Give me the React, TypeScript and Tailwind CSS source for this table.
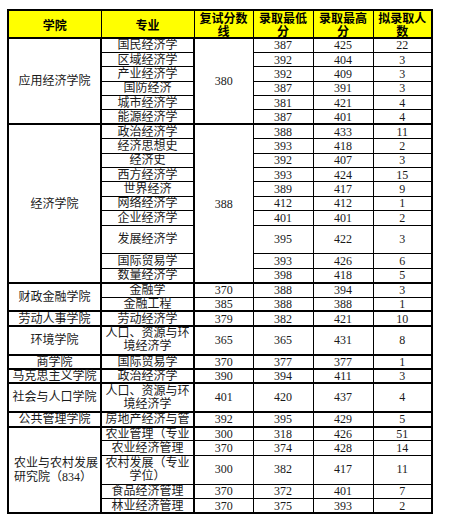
type Row = {
  major: string;
  retest?: string;
  min: string;
  max: string;
  count: string;
  tall?: boolean;
};

type Group = {
  college: string;
  retest?: string;
  alignLeft?: boolean;
  rows: Row[];
};

const groups: Group[] = [
  {
    college: '应用经济学院',
    retest: '380',
    rows: [
      { major: '国民经济学', min: '387', max: '425', count: '22' },
      { major: '区域经济学', min: '392', max: '404', count: '3' },
      { major: '产业经济学', min: '392', max: '409', count: '3' },
      { major: '国防经济', min: '387', max: '391', count: '3' },
      { major: '城市经济学', min: '381', max: '421', count: '4' },
      { major: '能源经济学', min: '387', max: '401', count: '4' },
    ],
  },
  {
    college: '经济学院',
    retest: '388',
    rows: [
      { major: '政治经济学', min: '388', max: '433', count: '11' },
      { major: '经济思想史', min: '393', max: '418', count: '2' },
      { major: '经济史', min: '392', max: '407', count: '3' },
      { major: '西方经济学', min: '393', max: '424', count: '15' },
      { major: '世界经济', min: '389', max: '417', count: '9' },
      { major: '网络经济学', min: '412', max: '412', count: '1' },
      { major: '企业经济学', min: '401', max: '401', count: '2' },
      { major: '发展经济学', min: '395', max: '422', count: '3', tall: true },
      { major: '国际贸易学', min: '393', max: '426', count: '6' },
      { major: '数量经济学', min: '398', max: '418', count: '5' },
    ],
  },
  {
    college: '财政金融学院',
    rows: [
      { major: '金融学', retest: '370', min: '388', max: '394', count: '3' },
      { major: '金融工程', retest: '385', min: '388', max: '388', count: '1' },
    ],
  },
  {
    college: '劳动人事学院',
    rows: [{ major: '劳动经济学', retest: '379', min: '382', max: '421', count: '10' }],
  },
  {
    college: '环境学院',
    rows: [
      { major: '人口、资源与环境经济学', retest: '365', min: '365', max: '431', count: '8', tall: true },
    ],
  },
  {
    college: '商学院',
    rows: [{ major: '国际贸易学', retest: '370', min: '377', max: '377', count: '1' }],
  },
  {
    college: '马克思主义学院',
    rows: [{ major: '政治经济学', retest: '390', min: '394', max: '411', count: '3' }],
  },
  {
    college: '社会与人口学院',
    rows: [
      { major: '人口、资源与环境经济学', retest: '401', min: '420', max: '437', count: '4', tall: true },
    ],
  },
  {
    college: '公共管理学院',
    rows: [{ major: '房地产经济与管', retest: '392', min: '395', max: '429', count: '5' }],
  },
  {
    college: '农业与农村发展研究院（834）',
    alignLeft: true,
    rows: [
      { major: '农业管理（专业', retest: '300', min: '318', max: '426', count: '51' },
      { major: '农业经济管理', retest: '370', min: '374', max: '428', count: '14' },
      { major: '农村发展（专业学位）', retest: '300', min: '382', max: '417', count: '11', tall: true },
      { major: '食品经济管理', retest: '370', min: '372', max: '401', count: '7' },
      { major: '林业经济管理', retest: '370', min: '375', max: '393', count: '2' },
    ],
  },
];

const headers = ['学院', '专业', '复试分数线', '录取最低分', '录取最高分', '拟录取人数'];

export default function App() {
  return (
    <div className="min-h-[521px] w-[452px] bg-white pl-[7px] pt-[9px]">
      <table
        className="table-fixed border-collapse border-2 border-black text-[12px] leading-[12px] text-[#1a1a1a]"
        style={{ width: 424 }}
      >
        <colgroup>
          <col className="w-[93px]" />
          <col className="w-[93px]" />
          <col className="w-[59px]" />
          <col className="w-[60px]" />
          <col className="w-[60px]" />
          <col className="w-[59px]" />
        </colgroup>
        <thead>
          <tr className="h-[27px] bg-[#ffff00]">
            {headers.map((h) => (
              <th
                key={h}
                className="border border-b-2 border-black p-0 px-[3px] text-center align-middle font-['Noto_Sans_CJK_SC',sans-serif] text-[12px] font-bold leading-[13px] text-black"
              >
                {h}
              </th>
            ))}
          </tr>
        </thead>
        <tbody className="font-['Liberation_Serif','Noto_Sans_CJK_SC',serif]">
          {groups.map((group) =>
            group.rows.map((row, i) => (
              <tr
                key={group.college + row.major + i}
                className={row.tall ? 'h-[28.8px] leading-[13px]' : 'h-[14.4px]'}
              >
                {i === 0 && (
                  <td
                    rowSpan={group.rows.length}
                    className={
                      group.alignLeft
                        ? 'border border-t-2 border-r-2 border-black p-0 pl-[5px] text-left align-middle leading-[14px]'
                        : 'border border-t-2 border-r-2 border-black p-0 text-center align-middle whitespace-nowrap'
                    }
                  >
                    {group.college}
                  </td>
                )}
                <td
                  className={
                    i === 0
                      ? 'border border-t-2 border-r-2 border-black p-0 text-center align-middle'
                      : 'border border-r-2 border-black p-0 text-center align-middle'
                  }
                >
                  {row.major}
                </td>
                {group.retest ? (
                  i === 0 && (
                    <td
                      rowSpan={group.rows.length}
                      className="border border-t-2 border-black p-0 text-center align-middle"
                    >
                      {group.retest}
                    </td>
                  )
                ) : (
                  <td
                    className={
                      i === 0
                        ? 'border border-t-2 border-black p-0 text-center align-middle'
                        : 'border border-black p-0 text-center align-middle'
                    }
                  >
                    {row.retest}
                  </td>
                )}
                {[row.min, row.max, row.count].map((v, k) => (
                  <td
                    key={k}
                    className={
                      i === 0
                        ? 'border border-t-2 border-black p-0 text-center align-middle'
                        : 'border border-black p-0 text-center align-middle'
                    }
                  >
                    {v}
                  </td>
                ))}
              </tr>
            ))
          )}
        </tbody>
      </table>
    </div>
  );
}
